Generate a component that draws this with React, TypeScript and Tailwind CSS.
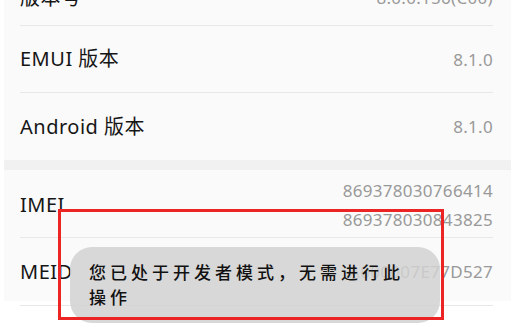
import React from 'react';

const font = { fontFamily: '"Noto Sans", "Noto Sans CJK SC", sans-serif' };

type RowProps = {
  label: string;
  values: string[];
  h: string;
  divider?: boolean;
  extra?: string;
};

const Row: React.FC<RowProps> = ({ label, values, h, divider = true, extra = '' }) => (
  <div className={`mx-[16px] mr-[18px] flex items-center justify-between ${h} ${extra} ${divider ? 'border-b border-[#e8e8e8]' : ''}`}>
    <span className="text-[20px] tracking-[0.5px] text-[#161616]">{label}</span>
    <div className="flex flex-col items-end text-[17px] leading-[29px] tracking-[0.3px] text-[#999999]">
      {values.map(v => (
        <span key={v}>{v}</span>
      ))}
    </div>
  </div>
);

const App: React.FC = () => {
  return (
    <div className="relative h-[331px] w-[520px] overflow-hidden bg-white" style={font}>
      <div className="ml-[4px] mr-[9px] h-full bg-[#fafafa]">
        <Row label="版本号" values={['8.0.0.156(C00)']} h="h-[56px]" extra="-mt-[30px]" />
        <Row label="EMUI 版本" values={['8.1.0']} h="h-[67px]" />
        <Row label="Android 版本" values={['8.1.0']} h="h-[67px]" divider={false} />
        <div className="h-[10px] bg-[#f1f1f1]" />
        <div className="pt-[2px]">
          <Row label="IMEI" values={['869378030766414', '869378030843825']} h="h-[66px]" />
        </div>
        <Row label="MEID" values={['A000007E77D527']} h="h-[68px]" />
        <Row label="" values={[]} h="h-[68px]" divider={false} />
      </div>

      {/* toast */}
      <div className="absolute left-[70px] top-[247px] h-[76px] w-[370px] rounded-[22px] bg-[#d1d1d1]/[0.85] px-[19px] pt-[13px] text-[17px] font-medium leading-[25px] tracking-[4px] text-[#111111]">
        您已处于开发者模式，无需进行此操作
      </div>

      {/* highlight box */}
      <div className="absolute left-[58px] top-[209px] h-[111px] w-[386px] border-[3px] border-[#ec2424]" />
    </div>
  );
};

export default App;
